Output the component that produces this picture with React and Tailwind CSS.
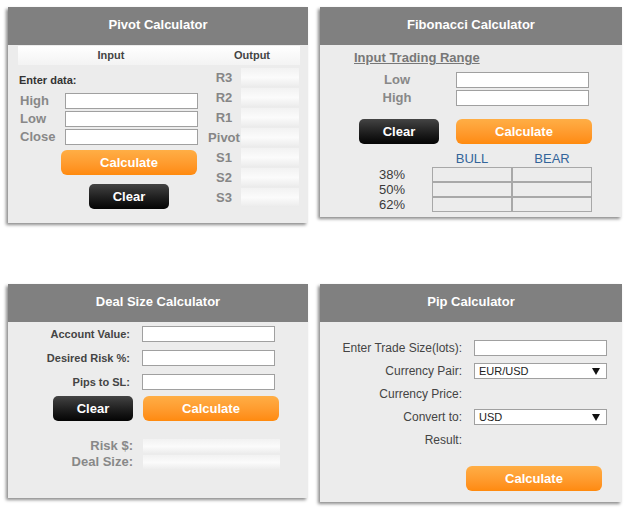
import React from "react";

const Panel = ({ title, className, children }) => (
  <div className={`bg-[#ececec] shadow-[-2px_2px_3px_rgba(0,0,0,0.45)] ${className}`}>
    <div className="h-[38px] bg-[#808080] pt-[10px] text-center text-[13px] font-bold leading-[15px] text-white">
      {title}
    </div>
    {children}
  </div>
);

const Field = ({ className = "" }) => (
  <input
    type="text"
    className={`h-[16px] w-[133px] border border-[#a0a0a0] bg-white px-1 text-[11px] outline-none ${className}`}
  />
);

const OrangeButton = ({ className = "" }) => (
  <button
    className={`h-[25px] w-[136px] rounded-[6px] bg-gradient-to-b from-[#ffae45] to-[#ff8a0c] text-[13px] font-bold text-white ${className}`}
  >
    Calculate
  </button>
);

const BlackButton = ({ className = "" }) => (
  <button
    className={`h-[25px] w-[80px] rounded-[5px] bg-gradient-to-b from-[#444444] to-[#050505] text-[13px] font-bold text-white ${className}`}
  >
    Clear
  </button>
);

const OutBox = ({ className = "" }) => (
  <div
    className={`bg-gradient-to-b from-[#f2f2f2] via-[#fbfbfb] to-[#ebebeb] ${className}`}
  />
);

const Select = ({ value }) => (
  <div className="ml-[12px] flex h-[16px] w-[133px] items-center justify-between border border-[#a0a0a0] bg-white pl-[4px] pr-[6px] text-[11px] text-[#222]">
    <span>{value}</span>
    <svg width="8" height="7" viewBox="0 0 8 7">
      <polygon points="0,0 8,0 4,7" fill="#111" />
    </svg>
  </div>
);

const PivotCalculator = () => {
  const inputs = ["High", "Low", "Close"];
  const outputs = ["R3", "R2", "R1", "Pivot", "S1", "S2", "S3"];
  return (
    <Panel title="Pivot Calculator" className="h-[216px]">
      <div className="pl-[10px] pr-[8px]">
        <div className="mt-[1px] flex h-[19px] items-center bg-gradient-to-b from-white to-[#f3f3f3] text-[11px] font-bold text-[#444]">
          <div className="w-[186px] text-center">Input</div>
          <div className="flex-1 text-center">Output</div>
        </div>
        <div className="flex">
          <div className="w-[189px]">
            <div className="mt-[8px] h-[14px] pl-[1px] text-[11px] font-bold leading-[14px] text-[#333]">
              Enter data:
            </div>
            <div className="mt-[6px] flex flex-col gap-[2px]">
              {inputs.map((label) => (
                <div key={label} className="flex h-[16px] items-center">
                  <div className="w-[47px] pl-[2px] text-[13px] font-bold leading-[16px] text-[#888]">
                    {label}
                  </div>
                  <Field />
                </div>
              ))}
            </div>
            <OrangeButton className="mt-[5px] ml-[43px] block" />
            <BlackButton className="mt-[9px] ml-[71px] block" />
          </div>
          <div className="flex flex-1 flex-col gap-[1px] pt-[3px]">
            {outputs.map((label) => (
              <div key={label} className="flex h-[19px]">
                <div className="w-[34px] text-center text-[13px] font-bold leading-[19px] text-[#868686]">
                  {label}
                </div>
                <OutBox className="h-[19px] w-[58px]" />
              </div>
            ))}
          </div>
        </div>
      </div>
    </Panel>
  );
};

const FibonacciCalculator = () => (
  <Panel title="Fibonacci Calculator" className="h-[210px]">
    <div className="mt-[5px] pl-[34px] text-[13px] font-bold leading-[16px] text-[#777] underline">
      Input Trading Range
    </div>
    <div className="mt-[6px] flex flex-col gap-[2px]">
      {["Low", "High"].map((label) => (
        <div key={label} className="flex h-[16px] items-center">
          <div className="ml-[18px] w-[118px] text-center text-[13px] font-bold leading-[16px] text-[#888]">
            {label}
          </div>
          <Field />
        </div>
      ))}
    </div>
    <div className="mt-[13px] flex gap-[17px] pl-[39px]">
      <BlackButton />
      <OrangeButton />
    </div>
    <div className="mt-[7px] flex h-[16px] pl-[112px] text-[13px] leading-[16px] text-[#33649a]">
      <div className="w-[80px] text-center">BULL</div>
      <div className="w-[80px] text-center">BEAR</div>
    </div>
    <div className="flex flex-col pl-[59px]">
      {["38%", "50%", "62%"].map((label) => (
        <div key={label} className="flex h-[15px]">
          <div className="w-[53px] text-[13px] leading-[15px] text-[#3a3a3a]">{label}</div>
          <div className="h-[15px] w-[80px] border border-[#a8a8a8]" />
          <div className="h-[15px] w-[80px] border border-[#a8a8a8]" />
        </div>
      ))}
    </div>
  </Panel>
);

const DealSizeCalculator = () => (
  <Panel title="Deal Size Calculator" className="h-[214px]">
    <div className="mt-[4px] flex flex-col gap-[8px]">
      {["Account Value:", "Desired Risk %:", "Pips to SL:"].map((label) => (
        <div key={label} className="flex h-[16px] items-center">
          <div className="w-[122px] text-right text-[11px] font-bold text-[#444]">{label}</div>
          <Field className="ml-[12px]" />
        </div>
      ))}
    </div>
    <div className="mt-[6px] flex gap-[10px] pl-[45px]">
      <BlackButton />
      <OrangeButton />
    </div>
    <div className="mt-[17px] flex flex-col">
      {["Risk $:", "Deal Size:"].map((label) => (
        <div key={label} className="flex h-[16px] items-center">
          <div className="w-[125px] text-right text-[13px] font-bold leading-[16px] text-[#888]">
            {label}
          </div>
          <OutBox className="ml-[10px] h-[15px] w-[137px]" />
        </div>
      ))}
    </div>
  </Panel>
);

const PipCalculator = () => (
  <Panel title="Pip Calculator" className="h-[218px]">
    <div className="mt-[18px] flex flex-col gap-[7px]">
      <div className="flex h-[16px] items-center">
        <div className="w-[142px] text-right text-[12px] text-[#444]">Enter Trade Size(lots):</div>
        <Field className="ml-[12px]" />
      </div>
      <div className="flex h-[16px] items-center">
        <div className="w-[142px] text-right text-[12px] text-[#444]">Currency Pair:</div>
        <Select value="EUR/USD" />
      </div>
      <div className="flex h-[16px] items-center">
        <div className="w-[142px] text-right text-[12px] text-[#444]">Currency Price:</div>
      </div>
      <div className="flex h-[16px] items-center">
        <div className="w-[142px] text-right text-[12px] text-[#444]">Convert to:</div>
        <Select value="USD" />
      </div>
      <div className="flex h-[16px] items-center">
        <div className="w-[142px] text-right text-[12px] text-[#444]">Result:</div>
      </div>
    </div>
    <OrangeButton className="mt-[18px] ml-[146px] block" />
  </Panel>
);

export default function App() {
  return (
    <div className="min-h-[510px] bg-white pl-[8px] pt-[7px] font-['Liberation_Sans',Arial,sans-serif]">
      <div className="grid grid-cols-[300px_302px] items-start gap-x-[12px] gap-y-[61px]">
        <PivotCalculator />
        <FibonacciCalculator />
        <DealSizeCalculator />
        <PipCalculator />
      </div>
    </div>
  );
}
